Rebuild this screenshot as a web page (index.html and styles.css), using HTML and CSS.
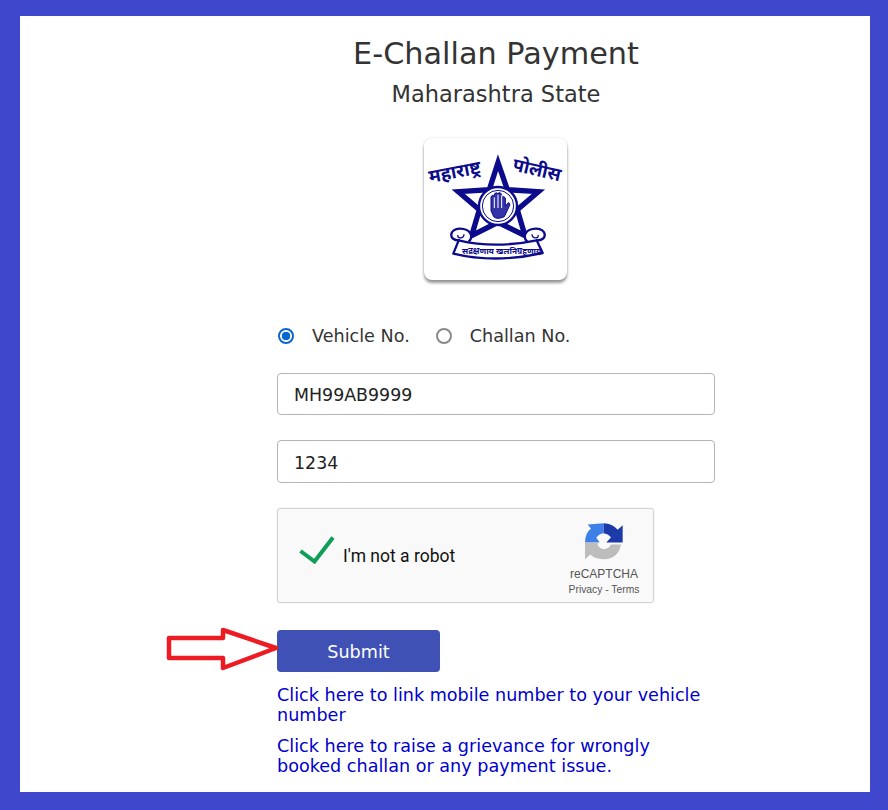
FILE: index.html
```html
<!DOCTYPE html>
<html>
<head>
  <meta charset="utf-8">
  <meta name="viewport" content="width=device-width, initial-scale=1">
  <title>E-Challan Payment</title>
  <link rel="stylesheet" href="styles.css">
</head>
<body>
  <div class="frame">
    <div class="container">
      <h1>E-Challan Payment</h1>
      <h2>Maharashtra State</h2>

      <div class="logo">
        <svg width="143" height="142" viewBox="42 25 429 426">
          <text class="logo-text" font-size="55" transform="translate(60 160) rotate(-11)">महाराष्ट्र</text>
          <text class="logo-text" font-size="55" transform="translate(305 122) rotate(13)">पोलीस</text>
          <polygon points="264,99 292,180 385,186 322,240 345,318 264,278 185,318 208,240 145,186 238,180" fill="#fff" stroke="#0b0b8c" stroke-width="16"/>
          <circle cx="264" cy="229" r="57" fill="#fff" stroke="#0b0b8c" stroke-width="7"/>
          <circle cx="264" cy="229" r="47" fill="#fff" stroke="#0b0b8c" stroke-width="3"/>
          <path d="M243 243 V201 Q249 193 253 201 V193 Q259 185 264 193 V191 Q271 185 275 195 V203 Q282 197 286 205 V229 L295 219 Q301 219 299 227 L283 261 Q261 271 251 261 Z" fill="#3434a8" stroke="#0b0b8c" stroke-width="3"/>
          <path d="M253 203 V235 M264 195 V235 M275 197 V235" stroke="#fff" stroke-width="3" fill="none"/>
          <path d="M150 332 C112 334 118 296 150 297 C182 298 192 320 176 336 M378 332 C416 334 410 296 378 297 C346 298 336 320 352 336" fill="#fff" stroke="#0b0b8c" stroke-width="7"/>
          <path d="M144 316 C140 328 162 328 162 314 M384 316 C388 328 366 328 366 314" fill="none" stroke="#0b0b8c" stroke-width="4"/>
          <path d="M146 332 Q255 358 380 332 L398 370 Q255 402 130 372 Z" fill="#fff" stroke="#0b0b8c" stroke-width="7" stroke-linejoin="round"/>
          <text class="logo-text" font-size="25" x="156" y="373">सद्रक्षणाय खलनिग्रहणाय</text>
        </svg>
      </div>

      <div class="radio-row">
        <label class="radio"><input type="radio" name="searchBy" checked> Vehicle No.</label>
        <label class="radio"><input type="radio" name="searchBy"> Challan No.</label>
      </div>

      <input class="field" type="text" value="MH99AB9999">
      <input class="field" type="text" value="1234">

      <div class="captcha">
        <svg class="tick" width="36" height="28" viewBox="0 0 36 28">
          <path d="M1.5 15 L15.5 25.5 L34 1.5" fill="none" stroke="#0f9d58" stroke-width="4"/>
        </svg>
        <span class="captcha-label">I'm not a robot</span>
        <div class="captcha-brand">
          <svg width="38" height="37" viewBox="22 22 114 110">
            <path d="M22 80 Q22 52 40 38 L30 26 L78 22 V52 Q62 54 56 66 L66 80 Z" fill="#3f7fe8"/>
            <path d="M78 22 Q104 22 120 42 L135 28 V80 H86 L100 64 Q92 54 78 52 Z" fill="#1c3aa9"/>
            <path d="M22 80 H60 Q58 96 78 100 Q92 100 100 86 H130 Q122 130 78 130 Q52 130 38 116 L22 130 Z" fill="#bdbdbd"/>
          </svg>
          <div class="captcha-name">reCAPTCHA</div>
          <div class="captcha-terms">Privacy - Terms</div>
        </div>
      </div>

      <div class="submit-row">
        <button class="submit">Submit</button>
        <svg class="arrow" width="116" height="48" viewBox="0 0 116 48">
          <polygon points="4,12 58,12 58,4 111,22 58,42 58,32 4,32" fill="#fff" stroke="#ed1c24" stroke-width="4.5" stroke-linejoin="round"/>
        </svg>
      </div>

      <a class="link" href="#">Click here to link mobile number to your vehicle number</a>
      <a class="link" href="#">Click here to raise a grievance for wrongly booked challan or any payment issue.</a>
    </div>
  </div>
</body>
</html>
```

FILE: styles.css
```css
html, body {
  margin: 0;
  padding: 0;
}

body {
  font-family: "DejaVu Sans", sans-serif;
  color: #333;
}

.frame {
  box-sizing: border-box;
  height: 810px;
  overflow: hidden;
  background-color: #fff;
  border-style: solid;
  border-color: #3f48cc;
  border-width: 16px 18px 18px 20px;
  padding-left: 257px;
}

.container {
  width: 438px;
}

h1 {
  margin: 0;
  padding-top: 20px;
  font-size: 30.3px;
  font-weight: normal;
  line-height: 35px;
  text-align: center;
}

h2 {
  margin: 9px 0 0;
  font-size: 22.5px;
  font-weight: normal;
  line-height: 28px;
  text-align: center;
}

.logo {
  width: 143px;
  height: 142px;
  margin: 30px auto 0;
  position: relative;
  left: -1px;
  background-color: #fff;
  border-radius: 8px;
  box-shadow: 0 3px 3px rgba(0, 0, 0, 0.4), 0 0 2px rgba(0, 0, 0, 0.15);
}

.logo svg {
  display: block;
}

.logo-text {
  font-family: "Noto Sans", "DejaVu Sans", sans-serif;
  fill: #0b0b8c;
  font-weight: bold;
}

.radio-row {
  display: flex;
  gap: 25px;
  margin-top: 44px;
  height: 24px;
  align-items: center;
}

.radio {
  display: flex;
  align-items: center;
  gap: 18px;
  font-size: 17.6px;
}

.radio input {
  appearance: none;
  box-sizing: border-box;
  width: 16px;
  height: 16px;
  margin: 0 0 0 1px;
  border: 2px solid #8a8a8a;
  border-radius: 50%;
  background-color: #fff;
}

.radio input:checked {
  border-color: #0a66cc;
  background: radial-gradient(circle, #0a66cc 0, #0a66cc 4px, #fff 4.6px);
}

.field {
  display: block;
  box-sizing: border-box;
  width: 100%;
  height: 42px;
  margin-top: 25px;
  padding: 2px 16px 0;
  border: 1px solid #b5b5b5;
  border-radius: 4px;
  font-family: "DejaVu Sans", sans-serif;
  font-size: 17.4px;
  color: #222;
}

.field + .field {
  height: 43px;
}

.captcha {
  box-sizing: border-box;
  display: flex;
  align-items: center;
  width: 377px;
  height: 95px;
  margin-top: 25px;
  padding-left: 21px;
  background-color: #f9f9f9;
  border: 1px solid #d3d3d3;
  border-radius: 3px;
  box-shadow: 0 0 2px rgba(0, 0, 0, 0.08);
}

.tick {
  margin-bottom: 12px;
}

.captcha-label {
  margin-left: 8px;
  font-family: Roboto, sans-serif;
  font-size: 17.5px;
  color: #111;
}

.captcha-brand {
  margin-left: auto;
  width: 98px;
  padding-top: 7px;
  text-align: center;
  color: #555;
  font-family: "Liberation Sans", sans-serif;
}

.captcha-brand svg {
  display: block;
  margin: 0 auto;
}

.captcha-name {
  margin-top: 7px;
  font-size: 12px;
}

.captcha-terms {
  margin-top: 3px;
  font-size: 10.3px;
}

.submit-row {
  position: relative;
  margin-top: 27px;
}

.arrow {
  position: absolute;
  left: -112px;
  top: -4px;
}

.submit {
  display: block;
  width: 163px;
  height: 42px;
  padding-top: 2px;
  background-color: #3f51b5;
  color: #fff;
  border: none;
  border-radius: 4px;
  font-family: "DejaVu Sans", sans-serif;
  font-size: 17.6px;
}

.link {
  display: block;
  margin-top: 13px;
  font-size: 17.6px;
  line-height: 20px;
  color: #0000cd;
  text-decoration: none;
}

.link + .link {
  margin-top: 11px;
}
```
